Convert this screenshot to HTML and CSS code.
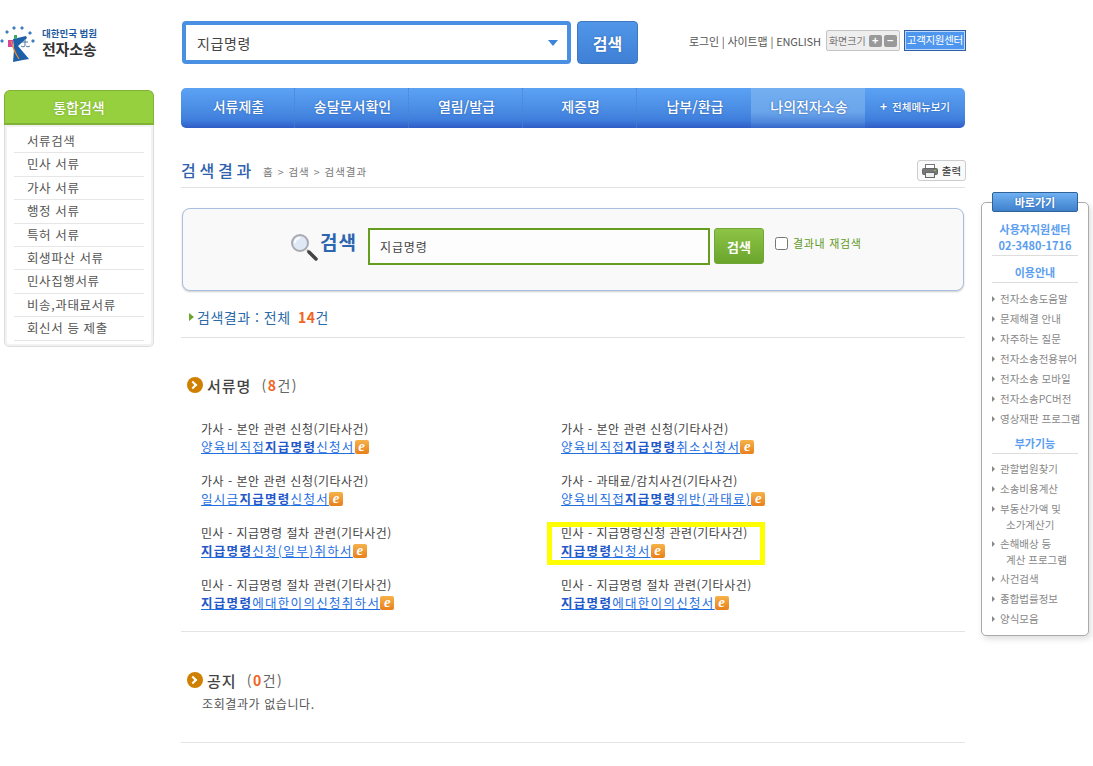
FILE: index.html
```html
<!DOCTYPE html>
<html lang="ko">
<head>
<meta charset="utf-8">
<title>전자소송 검색결과</title>
<link rel="stylesheet" href="styles.css">
</head>
<body>
<div class="page">
  <aside class="left">
    <div class="logo">
      <svg class="logo-mark" width="36" height="36" viewBox="0 0 36 36">
        <g fill="#3f7fbf"><path d="M2 13l2 2-2 2-2-2z"/><path d="M7 4l2 2-2 2-2-2z"/><path d="M14 0l2 2-2 2-2-2z"/><path d="M22 0l2 2-2 2-2-2z"/><path d="M30 5l2 2-2 2-2-2z"/><path d="M33 13l2 2-2 2-2-2z"/></g>
        <path d="M13 13l13-3 1 2-9 8 11 13-6 1-10 2 1-12z" fill="#1d5fa8"/>
        <rect x="8" y="14" width="5" height="7" fill="#d8449a"/>
        <rect x="14" y="9" width="3" height="4" fill="#3aa76d"/>
        <path d="M11 15c2 7 4 12 8 18" fill="none" stroke="#ee8a2c" stroke-width="1.2"/>
        <path d="M22 16h6M25 13v7M21 20c1 1 3 1 4 0M26 20c1 1 3 1 4 0" stroke="#4a7ea8" stroke-width="1" fill="none"/>
      </svg>
      <div class="logo-text"><span class="logo-top">대한민국 법원</span><span class="logo-main">전자소송</span></div>
    </div>
    <div class="side">
      <h2 class="side-head">통합검색</h2>
      <ul class="side-list">
        <li>서류검색</li><li>민사 서류</li><li>가사 서류</li><li>행정 서류</li><li>특허 서류</li><li>회생파산 서류</li><li>민사집행서류</li><li>비송,과태료서류</li><li>회신서 등 제출</li>
      </ul>
    </div>
  </aside>

  <main class="main">
    <header class="top">
      <div class="top-select"><span>지급명령</span><i class="caret"></i></div>
      <button class="top-btn">검색</button>
      <div class="util">
        <span class="util-links">로그인 | 사이트맵 | ENGLISH</span>
        <span class="zoom-box">화면크기<b class="zb">+</b><b class="zb">−</b></span>
        <span class="support">고객지원센터</span>
      </div>
    </header>

    <nav class="nav">
      <a>서류제출</a><a>송달문서확인</a><a>열림/발급</a><a>제증명</a><a>납부/환급</a><a class="on">나의전자소송</a><a class="all"><b>+</b>전체메뉴보기</a>
    </nav>

    <div class="title-row">
      <h1 class="title">검색결과</h1>
      <span class="crumb">홈 &gt; 검색 &gt; 검색결과</span>
      <button class="print">
        <svg width="16" height="14" viewBox="0 0 16 14"><rect x="3.5" y="0.5" width="9" height="5" fill="#fff" stroke="#777"/><rect x="0.5" y="4.5" width="15" height="6" rx="1" fill="#777" stroke="#666"/><rect x="3.5" y="8.5" width="9" height="5" fill="#eee" stroke="#666"/><rect x="12" y="6" width="2" height="1" fill="#7c3"/></svg>
        출력
      </button>
    </div>

    <section class="search">
      <svg class="glass" width="28" height="28" viewBox="0 0 28 28"><circle cx="10" cy="10" r="8" fill="#dfe9f6" stroke="#a9a9b2" stroke-width="2"/><path d="M5 10a5 5 0 0 1 5-5" stroke="#fff" stroke-width="2" fill="none"/><path d="M17 17l2 2" stroke="#999" stroke-width="2"/><path d="M19 19l7 7" stroke="#444" stroke-width="3.5" stroke-linecap="round"/></svg>
      <span class="search-label">검색</span>
      <div class="search-input">지급명령</div>
      <button class="search-btn">검색</button>
      <label class="research"><input type="checkbox" class="check">결과내 재검색</label>
    </section>

    <p class="summary"><i class="tri"></i>검색결과 : 전체 <b class="num">14</b>건</p>

    <section class="group docs">
      <h3 class="group-head"><i class="dot"></i>서류명 <span class="count">(<b class="num">8</b>건)</span></h3>
      <ul class="results">
        <li><p>가사 - 본안 관련 신청(기타사건)</p><a><u>양육비직접<b>지급명령</b>신청서</u><i class="e">e</i></a></li>
        <li><p>가사 - 본안 관련 신청(기타사건)</p><a><u>양육비직접<b>지급명령</b>취소신청서</u><i class="e">e</i></a></li>
        <li><p>가사 - 본안 관련 신청(기타사건)</p><a><u>일시금<b>지급명령</b>신청서</u><i class="e">e</i></a></li>
        <li><p>가사 - 과태료/감치사건(기타사건)</p><a><u>양육비직접<b>지급명령</b>위반(과태료)</u><i class="e">e</i></a></li>
        <li><p>민사 - 지급명령 절차 관련(기타사건)</p><a><u><b>지급명령</b>신청(일부)취하서</u><i class="e">e</i></a></li>
        <li class="marked"><p>민사 - 지급명령신청 관련(기타사건)</p><a><u><b>지급명령</b>신청서</u><i class="e">e</i></a></li>
        <li><p>민사 - 지급명령 절차 관련(기타사건)</p><a><u><b>지급명령</b>에대한이의신청취하서</u><i class="e">e</i></a></li>
        <li><p>민사 - 지급명령 절차 관련(기타사건)</p><a><u><b>지급명령</b>에대한이의신청서</u><i class="e">e</i></a></li>
      </ul>
    </section>

    <section class="group notice">
      <h3 class="group-head"><i class="dot"></i>공지 <span class="count">(<b class="num">0</b>건)</span></h3>
      <p class="empty">조회결과가 없습니다.</p>
    </section>
  </main>

  <aside class="quick">
    <div class="quick-tab">바로가기</div>
    <div class="quick-tel">사용자지원센터<br>02-3480-1716</div>
    <div class="quick-head">이용안내</div>
    <ul class="quick-list">
      <li>전자소송도움말</li><li>문제해결 안내</li><li>자주하는 질문</li><li>전자소송전용뷰어</li><li>전자소송 모바일</li><li>전자소송PC버전</li><li>영상재판 프로그램</li>
    </ul>
    <div class="quick-head second">부가기능</div>
    <ul class="quick-list">
      <li>관할법원찾기</li><li>소송비용계산</li><li class="two">부동산가액 및<br><span class="ind">소가계산기</span></li><li class="two">손해배상 등<br><span class="ind">계산 프로그램</span></li><li>사건검색</li><li>종합법률정보</li><li>양식모음</li>
    </ul>
  </aside>
</div>
</body>
</html>
```
FILE: styles.css
```css
*, *::before, *::after { box-sizing: border-box; }
html, body { margin: 0; padding: 0; background: #fff; }
body { font-family: "Noto Sans CJK KR", "Noto Sans", sans-serif; font-size: 12px; color: #444; overflow: hidden; }
ul { list-style: none; margin: 0; padding: 0; }
h1, h2, h3, p { margin: 0; font-weight: normal; }
button { font-family: inherit; padding: 0; cursor: pointer; }

.page { position: relative; display: grid; grid-template-columns: 181px 784px; height: 766px; overflow: hidden; }

/* left column */
.left { padding-left: 4px; }
.logo { height: 90px; margin-left: -4px; padding-top: 26px; display: flex; gap: 6px; align-items: flex-start; }
.logo-mark { flex: none; }
.logo-text { display: flex; flex-direction: column; padding-top: 1px; }
.logo-top { font-size: 9.5px; line-height: 12px; font-weight: 700; color: #1f5aa0; white-space: nowrap; }
.logo-main { font-size: 15px; line-height: 20px; font-weight: 700; color: #333; letter-spacing: -0.2px; }

.side { width: 150px; }
.side-head { height: 35px; line-height: 32px; text-align: center; font-size: 14px; font-weight: 500; color: #fff; background: #96d03e; border: 1px solid #7fb235; border-bottom-width: 2px; border-radius: 6px 6px 0 0; text-shadow: 0 0 2px #6f9f2a; }
.side-list { height: 222px; padding: 5px 9px 0; border: 1px solid #ddd; border-top: 0; border-radius: 0 0 5px 5px; box-shadow: inset 0 0 0 2px #f2f2f2; }
.side-list li { height: 23.4px; line-height: 22px; padding-left: 13px; font-size: 12.5px; color: #555; border-bottom: 1px solid #e6e6e6; letter-spacing: 0.6px; }

/* header */
.top { height: 88px; padding-top: 21px; display: flex; align-items: flex-start; }
.top-select { flex: none; width: 389px; height: 43px; margin-left: 1px; padding: 0 9px 0 11px; display: flex; align-items: center; justify-content: space-between; border: 4px solid #4a90e2; border-radius: 4px; font-size: 14px; color: #444; letter-spacing: 0.6px; }
.caret { width: 0; height: 0; border: 5px solid transparent; border-top: 6px solid #3d85d8; border-bottom: 0; }
.top-btn { flex: none; width: 61px; height: 43px; margin-left: 6px; border: 1px solid #3f78bd; border-radius: 4px; color: #fff; font-size: 16px; font-weight: 700; background: linear-gradient(#5196e8, #3f80d6); text-shadow: 0 0 2px #2a5fa8; }
.util { flex: none; margin-left: 51px; padding-top: 9px; display: flex; align-items: center; }
.util-links { font-size: 11px; color: #555; white-space: nowrap; margin-right: 5px; letter-spacing: -0.15px; }
.zoom-box { flex: none; width: 74px; height: 21px; display: flex; align-items: center; padding-left: 2px; gap: 2px; font-size: 10px; color: #777; background: #eee; border: 1px solid #c4c4c4; border-radius: 2px; white-space: nowrap; }
.zb { width: 13px; height: 12px; line-height: 11px; text-align: center; color: #fff; background: #999; border-radius: 2px; font-size: 11px; }
.zb:first-of-type { margin-left: 1px; }
.support { flex: none; width: 62px; height: 21px; margin-left: 4px; line-height: 18px; text-align: center; font-size: 10.5px; color: #fff; background: #4f97ee; border: 1px solid #2f5fa8; box-shadow: inset 0 0 0 1px #bcd8f8; white-space: nowrap; letter-spacing: -0.3px; }

/* nav */
.nav { display: flex; height: 40px; border-radius: 5px; overflow: hidden; background: linear-gradient(#5ba2f4 0, #4a8ce4 55%, #3f7edc 80%, #2f5cc6 100%); }
.nav a { flex: none; width: 114px; padding-left: 2px; line-height: 36px; text-align: center; color: #fff; font-size: 14px; font-weight: 500; text-shadow: 0 0 2px #2a5fa8; border-right: 1px dotted #4a82cc; }
.nav a:nth-child(n+5) { border-right: 0; }
.nav a.on { background: linear-gradient(#74b0f2, #6aa4ea 60%, #5088dc 85%, #3566c8); }
.nav a.all { flex: 1; padding-left: 0; font-size: 10.5px; font-weight: 500; }
.nav a.all b { margin-right: 5px; font-size: 12px; }

/* title */
.title-row { height: 60px; display: flex; align-items: flex-end; padding-bottom: 6px; border-bottom: 1px solid #e2e2e2; }
.title { font-size: 16px; line-height: 22px; font-weight: 500; color: #2f62ad; letter-spacing: 3.8px; }
.crumb { margin-left: 8px; font-size: 10.5px; line-height: 18px; color: #777; letter-spacing: 1px; white-space: nowrap; }
.print { margin-left: auto; margin-right: -1px; width: 49px; height: 21px; display: flex; align-items: center; justify-content: center; gap: 4px; background: #fafafa; border: 1px solid #ccc; border-radius: 3px; font-size: 10.5px; color: #333; }

/* search panel */
.search { margin: 20px 1px 0; height: 83px; padding: 19px 0 0 107px; display: flex; align-items: flex-start; background: #f9f9f9; border: 1px solid #a9bfdf; border-radius: 8px; box-shadow: 0 1px 2px #ccc; }
.glass { flex: none; margin-top: 5px; }
.search-label { margin: 1px 0 0 2px; font-size: 19px; line-height: 26px; font-weight: 700; color: #2c65b0; letter-spacing: 1px; }
.search-input { flex: none; width: 342px; height: 37px; margin-left: 11px; padding-left: 10px; line-height: 34px; border: 2px solid #659d1f; font-size: 12px; color: #444; letter-spacing: 0.9px; background: #fdfdfd; }
.search-btn { flex: none; width: 50px; height: 36px; margin-left: 4px; color: #fff; font-size: 13px; font-weight: 700; background: linear-gradient(#8dc446, #6ba52c); border: 1px solid #6fa635; border-radius: 3px; }
.research { margin-left: 11px; height: 30px; display: flex; align-items: center; gap: 5px; color: #5f9a1e; font-size: 11px; letter-spacing: 0.7px; white-space: nowrap; }
.check { width: 13px; height: 13px; margin: 0; }

/* summary */
.summary { position: relative; height: 47px; padding: 15px 0 0 16px; line-height: 22px; font-size: 14px; color: #2a6aa8; letter-spacing: 0.5px; border-bottom: 1px solid #e2e2e2; }
.tri { display: inline-block; position: absolute; left: 8px; top: 22px; width: 0; height: 0; border: 4px solid transparent; border-left: 5px solid #6da52a; border-right: 0; }
.num { color: #f0641e; font-weight: 700; }
.summary .num { margin-left: 3px; }

/* groups */
.group { border-bottom: 1px solid #e4e4e4; }
.docs { height: 294px; padding-top: 36px; }
.notice { height: 111px; padding-top: 37px; }
.group-head { display: flex; align-items: center; height: 22px; padding-left: 6px; font-size: 15px; font-weight: 500; color: #444; letter-spacing: 1px; white-space: pre; }
.count { margin-left: 5px; font-size: 14px; font-weight: 400; color: #666; letter-spacing: 1.4px; }
.dot { position: relative; flex: none; width: 16px; height: 16px; margin-right: 4px; border-radius: 50%; background: #d08000; }
.dot::after { content: ""; position: absolute; left: 3px; top: 5px; width: 6px; height: 6px; border: solid #fff; border-width: 2px 2px 0 0; transform: rotate(45deg); }
.results { margin-top: 23px; display: grid; grid-template-columns: 360px 360px; grid-auto-rows: 52px; padding-left: 20px; }
.results li { position: relative; }
.results p { font-size: 12px; line-height: 19px; color: #444; letter-spacing: 0.5px; white-space: nowrap; }
.results a { display: flex; align-items: center; height: 19px; margin-top: -1px; font-size: 12.5px; color: #1f6fe0; letter-spacing: 1.3px; white-space: nowrap; }
.results u { text-underline-offset: 1px; }
.results u b { color: #2458c8; font-weight: 700; }
.e { flex: none; width: 14px; height: 14px; text-align: center; font: italic 700 15px/13px "Liberation Serif", serif; color: #fff; background: linear-gradient(#f6b24a, #e8801c); border-radius: 2px; letter-spacing: 0; }
.marked::after { content: ""; position: absolute; left: -14px; top: -1px; width: 218px; height: 43px; border: 5px solid #ff0; }
.empty { margin-top: 4px; padding-left: 21px; font-size: 12px; line-height: 18px; letter-spacing: 0.6px; color: #555; }

/* quick menu */
.quick { position: absolute; left: 981px; top: 202px; width: 108px; height: 434px; padding-top: 18px; background: #fff; border: 1px solid #aaa; border-radius: 5px; box-shadow: 2px 3px 6px #ddd; text-align: center; }
.quick-tab { position: absolute; left: 10px; top: -11px; width: 86px; height: 20px; line-height: 18px; color: #fff; font-size: 11px; font-weight: 700; background: linear-gradient(#6fb1f2, #3f80cc); border: 1px solid #2f6397; border-radius: 2px; text-shadow: 0 0 2px #2a5fa8; }
.quick-tel { margin: 0 10px; height: 35px; font-size: 11px; line-height: 16px; font-weight: 700; color: #5b9ef0; border-bottom: 1px solid #ddd; white-space: nowrap; }
.quick-head { margin: 0 10px; height: 27px; line-height: 32px; font-size: 11px; font-weight: 700; color: #5b9ef0; border-bottom: 1px solid #ddd; }
.quick-head.second { height: 21px; margin-top: 4px; line-height: 20px; }
.quick-list { margin-top: 6px; text-align: left; padding-left: 18px; }
.quick-head.second + .quick-list { margin-top: 5px; }
.quick-list li { position: relative; font-size: 10.5px; line-height: 20px; color: #888; white-space: nowrap; }
.quick-list li.two { height: 35px; padding-top: 2px; line-height: 16px; }
.ind { padding-left: 6px; }
.quick-list li::before { content: ""; position: absolute; left: -8px; top: 7px; width: 0; height: 0; border: 3px solid transparent; border-left: 3px solid #888; border-right: 0; }
```
